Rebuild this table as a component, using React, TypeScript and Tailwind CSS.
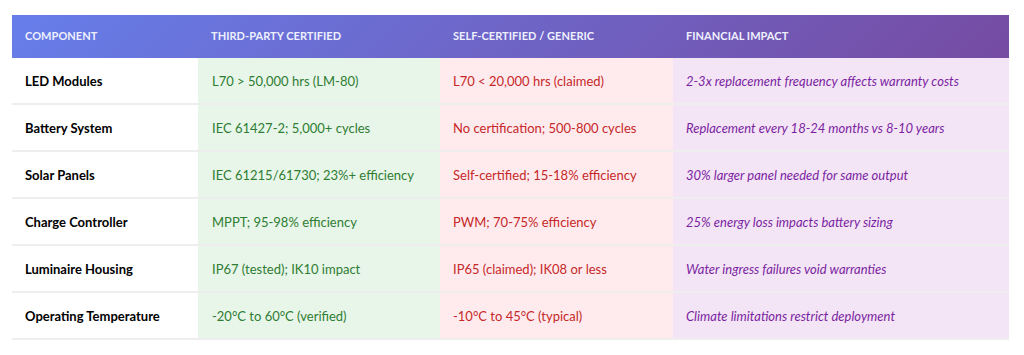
import React from 'react';

const rows = [
  ['LED Modules', 'L70 > 50,000 hrs (LM-80)', 'L70 < 20,000 hrs (claimed)', '2-3x replacement frequency affects warranty costs'],
  ['Battery System', 'IEC 61427-2; 5,000+ cycles', 'No certification; 500-800 cycles', 'Replacement every 18-24 months vs 8-10 years'],
  ['Solar Panels', 'IEC 61215/61730; 23%+ efficiency', 'Self-certified; 15-18% efficiency', '30% larger panel needed for same output'],
  ['Charge Controller', 'MPPT; 95-98% efficiency', 'PWM; 70-75% efficiency', '25% energy loss impacts battery sizing'],
  ['Luminaire Housing', 'IP67 (tested); IK10 impact', 'IP65 (claimed); IK08 or less', 'Water ingress failures void warranties'],
  ['Operating Temperature', '-20°C to 60°C (verified)', '-10°C to 45°C (typical)', 'Climate limitations restrict deployment'],
];

const headers = ['Component', 'Third-Party Certified', 'Self-Certified / Generic', 'Financial Impact'];

export default function App() {
  return (
    <main className="bg-white w-[1024px] h-[355px] pt-[15px] pl-[12px] font-['Lato',sans-serif]">
      <div className="w-[997px]">
        <div className="grid grid-cols-[186px_242px_233px_1fr] h-[43px] items-center bg-[linear-gradient(135deg,#667eea_0%,#764ba2_100%)]">
          {headers.map((h) => (
            <div key={h} className="px-[13px] text-[11px] font-bold uppercase tracking-[0.05px] text-[#eef0ff]">
              {h}
            </div>
          ))}
        </div>
        {rows.map((r) => (
          <div key={r[0]} className="grid grid-cols-[186px_242px_233px_1fr] h-[47px] text-[13px] border-b-2 border-[#eeeeee]">
            <div className="px-[13px] pt-[2px] flex items-center font-bold text-black">{r[0]}</div>
            <div className="px-[14px] pt-[2px] flex items-center bg-[#e8f5e9] text-[#2e7d32]">{r[1]}</div>
            <div className="px-[13px] pt-[2px] flex items-center bg-[#ffebee] text-[#c62828]">{r[2]}</div>
            <div className="px-[13px] pt-[2px] flex items-center bg-[#f3e5f5] text-[#7b1fa2] italic">{r[3]}</div>
          </div>
        ))}
      </div>
    </main>
  );
}
